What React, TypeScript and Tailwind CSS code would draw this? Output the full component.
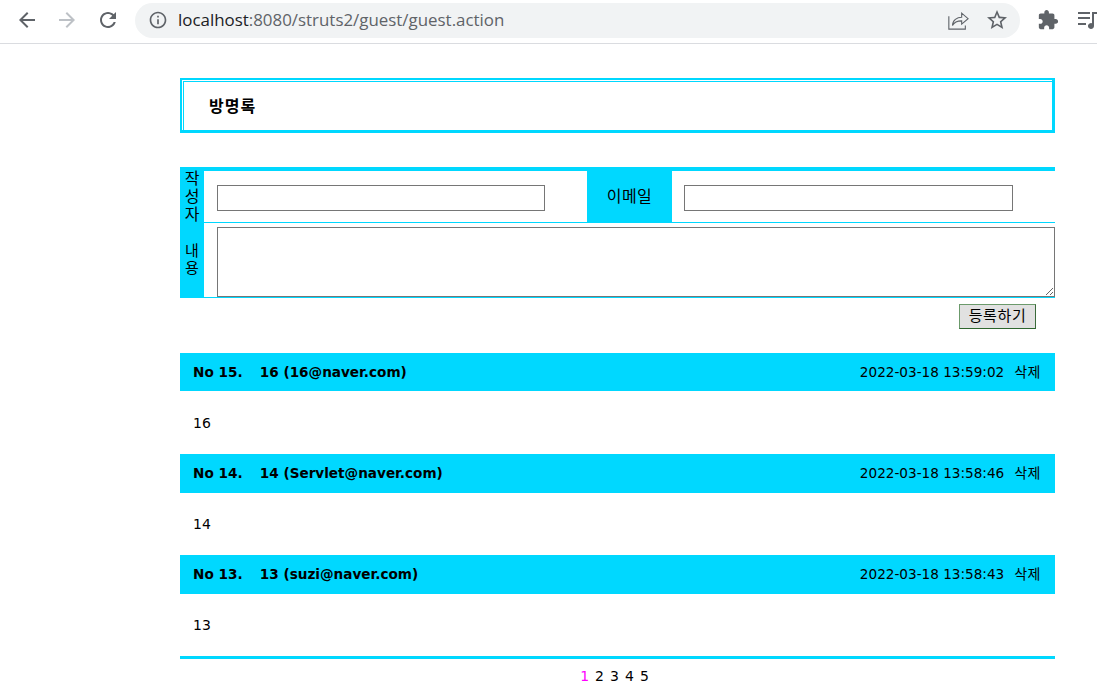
const rows = [
  { no: 15, name: "16", email: "16@naver.com", date: "2022-03-18 13:59:02", body: "16", head: "h-[38px] mb-[1px]" },
  { no: 14, name: "14", email: "Servlet@naver.com", date: "2022-03-18 13:58:46", body: "14", head: "h-[39px]" },
  { no: 13, name: "13", email: "suzi@naver.com", date: "2022-03-18 13:58:43", body: "13", head: "h-[39px]" },
];

const Icon = ({ d, className }: { d: string; className: string }) => (
  <svg viewBox="0 0 24 24" className={className} fill="currentColor">
    <path d={d} />
  </svg>
);

const BrowserBar = () => (
  <div className="h-[44px] flex items-center pb-[3px] border-b border-[#dadce0] bg-white overflow-hidden">
    <div className="w-[135px] shrink-0 flex items-center pl-[15px] gap-[16px]">
      <Icon className="w-[24px] h-[24px] text-[#5f6368]" d="M20 11H7.83l5.59-5.59L12 4l-8 8 8 8 1.41-1.41L7.83 13H20v-2z" />
      <Icon className="w-[24px] h-[24px] text-[#bdc1c6]" d="M12 4l-1.41 1.41L16.17 11H4v2h12.17l-5.58 5.59L12 20l8-8z" />
      <Icon className="w-[24px] h-[24px] ml-px text-[#5f6368]" d="M17.65 6.35C16.2 4.9 14.21 4 12 4c-4.42 0-7.99 3.58-7.99 8s3.57 8 7.99 8c3.73 0 6.84-2.55 7.73-6h-2.08c-.82 2.33-3.04 4-5.65 4-3.31 0-6-2.69-6-6s2.69-6 6-6c1.66 0 3.14.69 4.22 1.78L13 11h7V4l-2.35 2.35z" />
    </div>
    <div className="w-[885px] h-[35px] shrink-0 rounded-full bg-[#f1f3f4] flex items-center pl-[13px] pr-[11px]">
      <Icon className="w-[20px] h-[20px] text-[#5f6368]" d="M11 7h2v2h-2zm0 4h2v6h-2zm1-9C6.48 2 2 6.48 2 12s4.48 10 10 10 10-4.48 10-10S17.52 2 12 2zm0 18c-4.41 0-8-3.59-8-8s3.59-8 8-8 8 3.59 8 8-3.59 8-8 8z" />
      <div className="ml-[10px] flex-1 text-[16.9px] text-[#5f6368] font-['Open_Sans',sans-serif] whitespace-nowrap">
        <span className="text-[#202124]">localhost</span>:8080/struts2/guest/guest.action
      </div>
      <svg viewBox="0 0 24 24" className="w-[22px] h-[22px] text-[#5f6368] mr-[16px]" fill="none" stroke="currentColor" strokeWidth="1.2">
        <path d="M2 8v14h18v-4" />
        <path d="M6 18c0-6 5-9 10-9V4.5l7 6-7 6V13c-4 0-8 1-10 5z" />
      </svg>
      <Icon className="w-[24px] h-[24px] text-[#5f6368]" d="M22 9.24l-7.19-.62L12 2 9.19 8.63 2 9.24l5.46 4.73L5.82 21 12 17.27 18.18 21l-1.63-7.03L22 9.24zM12 15.4l-3.76 2.27 1-4.28-3.32-2.88 4.38-.38L12 6.1l1.71 4.04 4.38.38-3.32 2.88 1 4.28L12 15.4z" />
    </div>
    <Icon className="ml-[17px] w-[22px] h-[22px] shrink-0 text-[#5f6368]" d="M20.5 11H19V7c0-1.1-.9-2-2-2h-4V3.5C13 2.12 11.88 1 10.5 1S8 2.12 8 3.5V5H4c-1.1 0-1.99.9-1.99 2v3.8H3.5c1.49 0 2.7 1.21 2.7 2.7s-1.21 2.7-2.7 2.7H2V20c0 1.1.9 2 2 2h3.8v-1.5c0-1.49 1.21-2.7 2.7-2.7 1.49 0 2.7 1.21 2.7 2.7V22H17c1.1 0 2-.9 2-2v-4h1.5c1.38 0 2.5-1.12 2.5-2.5S21.88 11 20.5 11z" />
    <svg viewBox="0 0 24 24" className="ml-[19px] w-[24px] h-[24px] shrink-0 text-[#5f6368]" fill="currentColor">
      <path d="M0 4h12v2H0zm0 5h12v2H0zm0 6h8v2H0z" />
      <path d="M14 4h6v2h-4v12a3 3 0 1 1-2-2.8z" />
    </svg>
  </div>
);

const GuestForm = () => (
  <div className="mt-[34px] border-t-4 border-b border-[#00d8ff]">
    <div className="flex h-[52px] border-b border-[#00d8ff]">
      <div className="w-[24px] bg-[#00d8ff] text-center text-[16px] leading-[18px] flex items-center justify-center">
        작<br />성<br />자
      </div>
      <div className="w-[383px] flex items-center pl-[13px] pt-[3px]">
        <input className="w-[328px] h-[26px] border border-[#767676] bg-white" />
      </div>
      <div className="w-[85px] bg-[#00d8ff] flex items-center justify-center text-[16px] tracking-[0.5px]">이메일</div>
      <div className="flex-1 flex items-center pl-[12px] pt-[3px]">
        <input className="w-[329px] h-[26px] border border-[#767676] bg-white" />
      </div>
    </div>
    <div className="flex h-[74px]">
      <div className="w-[24px] bg-[#00d8ff] text-center text-[15px] leading-[17px] flex items-center justify-center">
        내<br />용
      </div>
      <div className="flex-1 pl-[13px] pt-[4px] flex">
        <textarea className="w-[838px] h-[70px] border border-[#767676] bg-white" />
      </div>
    </div>
  </div>
);

const App = () => (
  <div className="min-h-[696px] bg-white text-black font-['DejaVu_Sans','Noto_Sans_CJK_KR',sans-serif]">
    <BrowserBar />
    <div className="ml-[180px] w-[875px]">
      <div className="mt-[34px] h-[55px] border-t-2 border-l-2 border-r-[3px] border-b-[3px] border-[#00d8ff] pt-px pl-px">
        <div className="h-full border-t border-l border-[#00d8ff] flex items-center pl-[25px] pt-px text-[16px] font-bold tracking-[1px]">
          방명록
        </div>
      </div>
      <GuestForm />
      <div className="flex justify-end pr-[19px] mt-[6px]">
        <button className="w-[77px] h-[25px] border border-t-[#6b9a6b] border-l-[#6b9a6b] border-r-[#3a6a3a] border-b-[#2f662f] bg-[#e1e1e1] text-[15px] tracking-[0.6px] leading-none">
          등록하기
        </button>
      </div>
      <div className="mt-[24px]">
        {rows.map((r) => (
          <div key={r.no}>
            <div className={`${r.head} bg-[#00d8ff] flex items-center justify-between pl-[13px] pr-[14px]`}>
              <span className="text-[13.6px] font-bold whitespace-pre">
                No {r.no}.{"   "}
                <span className="ml-[3px]">{r.name} ({r.email})</span>
              </span>
              <span className="text-[13.6px] whitespace-pre">
                {r.date}
                <span className="ml-[10px] text-[14px] tracking-[0.5px]">삭제</span>
              </span>
            </div>
            <div className="h-[62px] flex items-center pl-[13px] text-[14px]">{r.body}</div>
          </div>
        ))}
      </div>
      <div className="border-t-[3px] border-[#00d8ff] pt-[7px] pr-[6px] flex justify-center gap-[6px] text-[14px] leading-[20px]">
        <span className="text-[#ff00ff]">1</span>
        <span>2</span>
        <span>3</span>
        <span>4</span>
        <span>5</span>
      </div>
    </div>
  </div>
);

export default App;
